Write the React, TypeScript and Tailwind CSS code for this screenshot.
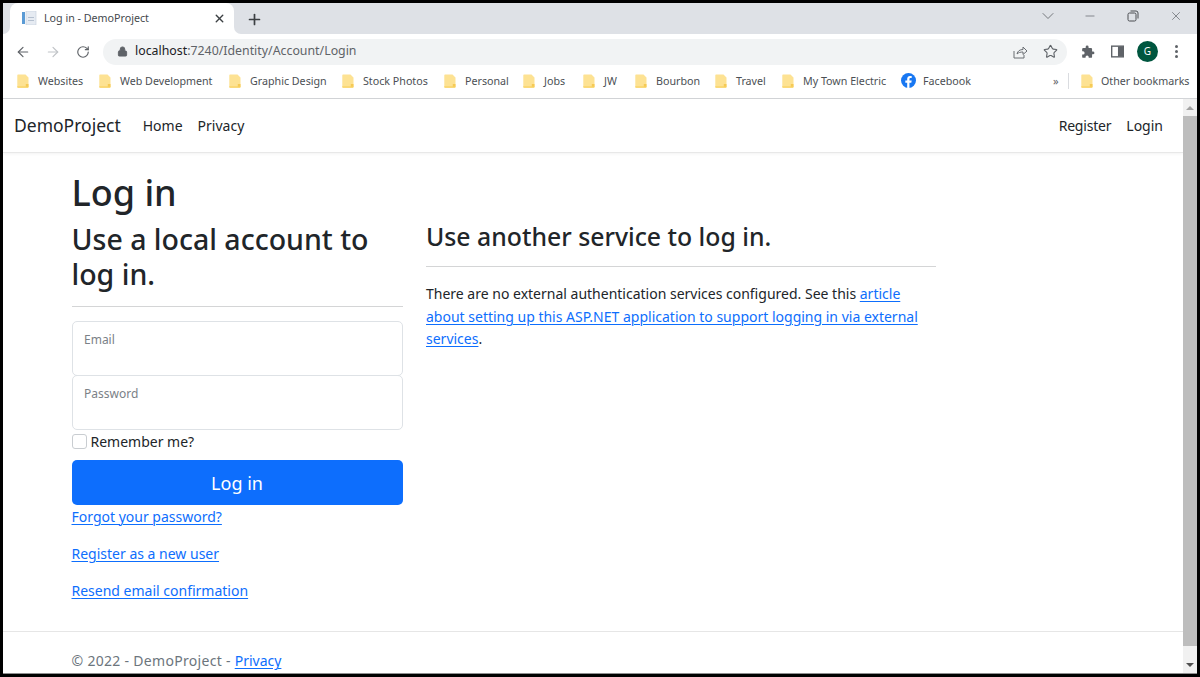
import { ArrowLeft, ArrowRight, RotateCw, Lock, Star, Plus, X, ChevronDown, Minus } from "lucide-react";

const FONT = "font-['Noto_Sans','Open_Sans',sans-serif]";

function Folder() {
  return (
    <svg width="12" height="14" viewBox="0 0 12 14" className="shrink-0">
      <path d="M1 0.500h7.500l3 3v9.500a.7.7 0 0 1-.7.7H1a.7.7 0 0 1-.7-.7V1.200A.7.7 0 0 1 1 .5z" fill="#fde293" />
      <path d="M0.300 12.300h11.200v.7a.7.7 0 0 1-.7.7H1a.7.7 0 0 1-.7-.7z" fill="#f9d46b" />
      <rect x="8.800" y="10" width="2.700" height="2.700" fill="#f6ca55" />
    </svg>
  );
}

function Bookmark({ label, w }: { label: string; w: string }) {
  return (
    <div className={`flex items-center gap-[9px] ${w}`}>
      <Folder />
      <span className="text-[10.700px] text-[#4b4f54] whitespace-nowrap">{label}</span>
    </div>
  );
}

function Fb() {
  return (
    <svg width="15" height="15" viewBox="0 0 16 16" className="shrink-0">
      <circle cx="8" cy="8" r="8" fill="#1877f2" />
      <path d="M11 10.300l.4-2.300H9V6.500c0-.7.3-1.200 1.300-1.200h1.100V3.300S10.500 3.100 9.600 3.100C7.800 3.100 6.600 4.200 6.600 6.200V8H4.600v2.300h2V16h2.400v-5.700z" fill="#fff" />
    </svg>
  );
}

const link = "text-[#0d6efd] underline decoration-1 underline-offset-2";

export default function App() {
  return (
    <div className={`w-[1200px] h-[677px] overflow-hidden bg-black p-[3px] ${FONT}`}>
      <div className="w-full h-full flex flex-col bg-white overflow-hidden border-b border-[#8f8f8f]">
        {/* tab strip */}
        <div className="h-[31px] shrink-0 bg-[#dee1e6] flex items-end pl-[7px]">
          <div className="relative w-[224px] h-[31px] bg-white rounded-t-[8px] flex items-center pl-[12px] pr-[8px] pb-[1px]">
            <div className="absolute -left-[7px] bottom-0 w-[7px] h-[7px] bg-white">
              <div className="w-full h-full bg-[#dee1e6] rounded-br-[7px]" />
            </div>
            <div className="absolute -right-[7px] bottom-0 w-[7px] h-[7px] bg-white">
              <div className="w-full h-full bg-[#dee1e6] rounded-bl-[7px]" />
            </div>
            <svg width="15" height="14" viewBox="0 0 15 14" className="shrink-0">
              <rect x="0" y="1" width="3" height="12" fill="#5b9bd5" />
              <rect x="4" y="0" width="10" height="14" fill="#e6ebf2" stroke="#c3ccd9" strokeWidth=".6" />
              <rect x="6" y="6" width="6" height="1" fill="#b5c0cf" />
              <rect x="6" y="9" width="6" height="1" fill="#b5c0cf" />
            </svg>
            <span className="ml-[7px] text-[10.700px] text-[#45494e] whitespace-nowrap">Log in - DemoProject</span>
            <X size={13} strokeWidth={2.6} className="ml-auto text-[#3c4043]" />
          </div>
          <div className="w-[40px] h-[30px] flex items-center justify-center">
            <Plus size={17} strokeWidth={2.4} className="text-[#3c4043]" />
          </div>
          <div className="ml-auto h-full flex items-center pr-[14px] pb-[5px] text-[#5f6368]">
            <ChevronDown size={20} strokeWidth={1} className="mr-[25px]" />
            <Minus size={14} strokeWidth={1.2} className="mr-[30px]" />
            <svg width="12" height="12" viewBox="0 0 12 12" fill="none" stroke="#4a4d51" strokeWidth="1" className="mr-[30px]">
              <rect x="1" y="3" width="8" height="8" rx="1.500" />
              <path d="M3.500 1h5.500a2 2 0 0 1 2 2v5.500" />
            </svg>
            <X size={14} strokeWidth={1.2} />
          </div>
        </div>
        {/* toolbar */}
        <div className="h-[33px] shrink-0 bg-white flex items-center pl-[12px] pt-[2px]">
          <ArrowLeft size={16} strokeWidth={1.8} className="text-[#5f6368]" />
          <ArrowRight size={16} strokeWidth={1.8} className="ml-[14px] text-[#c0c3c7]" />
          <RotateCw size={14} strokeWidth={2} className="ml-[15px] text-[#5f6368]" />
          <div className="ml-[13px] w-[964px] h-[26px] rounded-full bg-[#f1f3f4] flex items-center pl-[14px] pr-[9px]">
            <Lock size={11} fill="#5f6368" strokeWidth={2} className="text-[#5f6368]" />
            <span className="ml-[7px] text-[12.350px] text-[#5f6368] whitespace-nowrap"><span className="text-[#202124]">localhost</span>:7240/Identity/Account/Login</span>
            <svg width="15" height="14" viewBox="0 0 15 14" fill="none" stroke="#6a6e73" strokeWidth="1" className="ml-auto mr-[15px]">
              <path d="M1 6v7h10v-3" />
              <path d="M4 9c.5-3 3-4.500 6-4.500V2l4 4-4 3.500V7C7.500 7 5.500 7.500 4 9z" />
            </svg>
            <Star size={15} strokeWidth={1.8} className="text-[#5f6368]" />
          </div>
          <svg width="14" height="14" viewBox="0 0 24 24" className="ml-[14px]" fill="#5f6368">
            <path d="M20.500 11H19V7a2 2 0 0 0-2-2h-4V3.500a2.500 2.500 0 0 0-5 0V5H4a2 2 0 0 0-2 2v3.800h1.500a2.700 2.700 0 0 1 0 5.400H2V20a2 2 0 0 0 2 2h3.800v-1.500a2.700 2.700 0 0 1 5.400 0V22H17a2 2 0 0 0 2-2v-4h1.500a2.500 2.500 0 0 0 0-5z" />
          </svg>
          <svg width="13" height="13" viewBox="0 0 14 13" className="ml-[16px]">
            <rect x=".75" y=".75" width="12.500" height="11.500" fill="none" stroke="#5f6368" strokeWidth="1.500" />
            <rect x="7.500" y="1" width="5.500" height="11" fill="#5f6368" />
          </svg>
          <div className="ml-[13px] w-[21px] h-[21px] rounded-full bg-[#00563f] flex items-center justify-center text-[10px] text-white">G</div>
          <div className="ml-[17px] flex flex-col gap-[2px]">
            <span className="w-[3px] h-[3px] rounded-full bg-[#5f6368]" />
            <span className="w-[3px] h-[3px] rounded-full bg-[#5f6368]" />
            <span className="w-[3px] h-[3px] rounded-full bg-[#5f6368]" />
          </div>
        </div>
        {/* bookmarks */}
        <div className="h-[32px] shrink-0 bg-white border-b border-[#d3d5d8] flex items-center pl-[14px] pb-[3px]">
          <Bookmark label="Websites" w="w-[82px]" />
          <Bookmark label="Web Development" w="w-[130px]" />
          <Bookmark label="Graphic Design" w="w-[113px]" />
          <Bookmark label="Stock Photos" w="w-[102px]" />
          <Bookmark label="Personal" w="w-[79px]" />
          <Bookmark label="Jobs" w="w-[60px]" />
          <Bookmark label="JW" w="w-[52px]" />
          <Bookmark label="Bourbon" w="w-[80px]" />
          <Bookmark label="Travel" w="w-[67px]" />
          <Bookmark label="My Town Electric" w="w-[119px]" />
          <div className="flex items-center gap-[7px] w-[152px]">
            <Fb />
            <span className="text-[10.700px] text-[#4b4f54]">Facebook</span>
          </div>
          <span className="w-[15px] text-[11px] text-[#5f6368]">»</span>
          <div className="w-px h-[16px] bg-[#dadce0]" />
          <div className="ml-[12px] flex items-center gap-[8px]">
            <Folder />
            <span className="text-[10.700px] text-[#4b4f54] whitespace-nowrap">Other bookmarks</span>
          </div>
        </div>
        {/* page */}
        <div className="flex-1 flex min-h-0">
          <div className="flex-1 min-w-0 flex flex-col text-[#212529]">
            <nav className="h-[54px] shrink-0 flex items-center pl-[11px] pr-[20px] border-b border-[#e8e8e8] shadow-[0_1px_3px_rgba(0,0,0,0.05)]">
              <span className="text-[17.500px]">DemoProject</span>
              <span className="ml-[22px] text-[14px]">Home</span>
              <span className="ml-[15px] text-[14px]">Privacy</span>
              <span className="ml-auto text-[14px] tracking-[-0.2px]">Register</span>
              <span className="ml-[15px] text-[14px]">Login</span>
            </nav>
            <main className="flex-1 min-h-0 pl-[68.500px] pt-[18px]">
              <h1 className="text-[36px] leading-[43px] font-medium">Log in</h1>
              <div className="flex items-start mt-[2px]">
                <div className="w-[331px]">
                  <h2 className="text-[28.500px] leading-[35px] font-medium mt-[6px]">Use a local account to log in.</h2>
                  <hr className="mt-[14px] border-[#d4d5d6]" />
                  <div className="mt-[14px] h-[55px] rounded-[5px] border border-[#dee2e6] pl-[11.500px] pt-[9px] text-[12px] text-[#7b8187]">Email</div>
                  <div className="-mt-px h-[55px] rounded-[5px] border border-[#dee2e6] pl-[11.500px] pt-[9px] text-[12px] text-[#7b8187]">Password</div>
                  <div className="flex items-center h-[24px] -mt-px">
                    <span className="w-[15px] h-[15px] rounded-[3px] border border-[#c9cdd1] bg-white" />
                    <span className="ml-[4px] text-[14px]">Remember me?</span>
                  </div>
                  <div className="mt-[7px] h-[45px] rounded-[5px] bg-[#0d6efd] flex items-center justify-center text-white text-[18px] pt-px">Log in</div>
                  <div className="h-[22px] flex items-center text-[14px]"><span className={link}>Forgot your password?</span></div>
                  <div className="mt-[15px] h-[22px] flex items-center text-[14px]"><span className={link}>Register as a new user</span></div>
                  <div className="mt-[15px] h-[22px] flex items-center text-[14px]"><span className={link}>Resend email confirmation</span></div>
                </div>
                <div className="ml-[23.500px] w-[510px]">
                  <h3 className="text-[24.800px] leading-[30px] font-medium mt-[5px]">Use another service to log in.</h3>
                  <hr className="mt-[15px] border-[#d4d5d6]" />
                  <p className="mt-[16px] text-[14px] leading-[22.500px]">
                    There are no external authentication services configured. See this <span className={link}>article about setting up this ASP.NET application to support logging in via external services</span>.
                  </p>
                </div>
              </div>
            </main>
            <footer className="h-[42px] shrink-0 border-t border-[#e6e6e6] pl-[68.500px] pt-[18px] text-[14px] leading-[22px] text-[#6c757d] tracking-[0.3px]">
              © 2022 - DemoProject - <span className={`${link} tracking-normal`}>Privacy</span>
            </footer>
          </div>
          {/* scrollbar */}
          <div className="w-[14px] shrink-0 bg-[#f1f1f1] flex flex-col items-center">
            <div className="h-[17px] flex items-center justify-center">
              <span className="w-0 h-0 border-x-[4px] border-x-transparent border-b-[4px] border-b-[#a3a3a3]" />
            </div>
            <div className="w-full flex-1 bg-[#bdbdbd]" />
            <div className="h-[27px] w-full flex items-end justify-center pb-[6px]">
              <span className="w-0 h-0 border-x-[4px] border-x-transparent border-t-[4px] border-t-[#505050]" />
            </div>
          </div>
        </div>
      </div>
    </div>
  );
}
